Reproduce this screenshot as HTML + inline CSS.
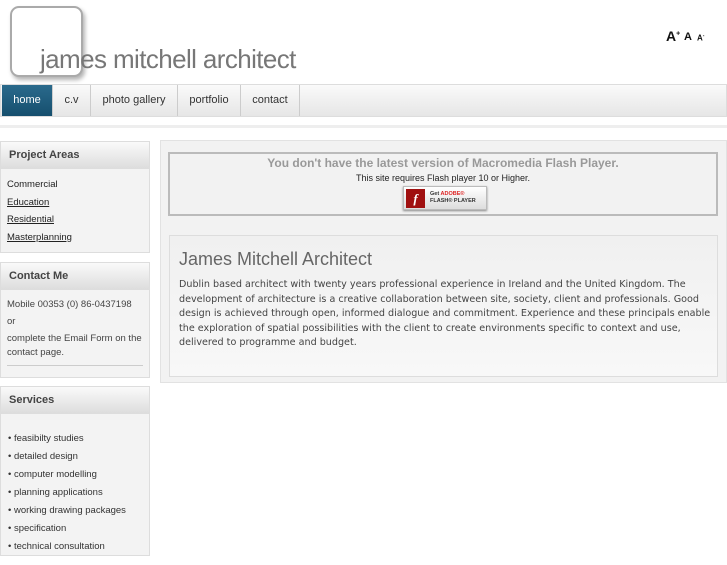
<!DOCTYPE html>
<html><head><style>
*{margin:0;padding:0;box-sizing:border-box}
body{width:727px;height:545px;overflow:hidden;background:#fff;font-family:"Liberation Sans",sans-serif;position:relative;color:#333}
.abs{position:absolute}
.logo{left:10px;top:6px;width:73px;height:71px;border:2px solid #aaa;border-radius:9px;background:#fff;box-shadow:2px 3px 4px rgba(0,0,0,.3)}
.title{left:40px;top:44px;font-size:26px;color:#777;letter-spacing:-0.6px;font-weight:300}
.nav{left:0;top:84px;width:727px;height:33px;border:1px solid #ddd;background:linear-gradient(#fafafa,#e6e6e6)}
.nav div{position:absolute;top:0;height:31px;line-height:31px;font-size:11px;color:#333;text-align:center;border-right:1px solid #ccc}
.box{left:0;width:150px;border:1px solid #ddd;background:#f3f3f3}
.hd{height:27px;line-height:26px;padding-left:8px;font-weight:bold;font-size:11px;color:#444;background:linear-gradient(#fafafa,#ddd);border-bottom:1px solid #ddd}
.bd{font-size:9.5px;color:#222;padding:6px 6px}
.bd p{height:17.5px}
.bd u{color:#222}
.li{height:18px;font-size:9.5px;color:#333}
</style></head><body>
<div class="abs logo"></div>
<div class="abs title">james mitchell architect</div>
<div class="abs" style="left:666px;top:28px;font-weight:bold;font-size:14px;color:#111">A<sup style="font-size:7px">+</sup></div>
<div class="abs" style="left:684px;top:31px;font-weight:bold;font-size:11px;color:#111">A</div>
<div class="abs" style="left:697px;top:33px;font-weight:bold;font-size:8px;color:#111">A<sup style="font-size:5px">-</sup></div>
<div class="abs nav">
<div style="left:1px;width:51px;background:linear-gradient(#2a6a8c,#164f6e);color:#fff">home</div>
<div style="left:52px;width:38px">c.v</div>
<div style="left:90px;width:87px">photo gallery</div>
<div style="left:177px;width:63px">portfolio</div>
<div style="left:240px;width:59px">contact</div>
</div>
<div class="abs" style="left:0;top:125px;width:727px;height:3px;background:#eee"></div>
<div class="abs box" style="top:141px;height:112px"><div class="hd">Project Areas</div>
<div class="bd" style="padding-top:10px"><p>Commercial</p><p><u>Education</u></p><p><u>Residential</u></p><p><u>Masterplanning</u></p></div></div>
<div class="abs box" style="top:262px;height:116px"><div class="hd">Contact Me</div>
<div class="bd" style="color:#444;padding-top:8px;line-height:14px"><p style="height:17px">Mobile 00353 (0) 86-0437198</p><p style="height:17px">or</p><p style="height:auto">complete the Email Form on the contact page.</p><div style="border-top:1px solid #ccc;margin-top:5px"></div></div></div>
<div class="abs box" style="top:386px;height:170px"><div class="hd">Services</div>
<div class="bd" style="padding-top:19px;padding-left:7px">
<div class="li">• feasibilty studies</div><div class="li">• detailed design</div><div class="li">• computer modelling</div><div class="li">• planning applications</div><div class="li">• working drawing packages</div><div class="li">• specification</div><div class="li">• technical consultation</div></div></div>
<div class="abs" style="left:160px;top:140px;width:567px;height:243px;background:#f2f2f2;border:1px solid #e2e2e2"></div>
<div class="abs" style="left:168px;top:152px;width:550px;height:64px;border:2px solid #bbb;background:#f2f2f2;text-align:center">
<div style="font-weight:bold;font-size:12px;color:#999;margin-top:2px">You don't have the latest version of Macromedia Flash Player.</div>
<div style="font-size:9px;color:#222;margin-top:3px">This site requires Flash player 10 or Higher.</div>
<div style="position:absolute;left:233px;top:32px;width:84px;height:24px;background:linear-gradient(#fff,#ddd);border:1px solid #bbb;box-shadow:0 1px 2px #888">
<div style="position:absolute;left:2px;top:2px;width:19px;height:19px;background:#a01010;color:#fff;font:italic bold 13px 'Liberation Serif';line-height:19px">f</div>
<div style="position:absolute;left:26px;top:4px;font-size:5.5px;font-weight:bold;text-align:left;line-height:7px;color:#333">Get <span style="color:#d22">ADOBE®</span><br>FLASH® PLAYER</div></div>
</div>
<div class="abs" style="left:169px;top:235px;width:549px;height:142px;border:1px solid #ddd;background:linear-gradient(#f0f0f0,#f8f8f8)">
<div style="position:absolute;left:9px;top:13px;font-size:18px;color:#666">James Mitchell Architect</div>
<div style="position:absolute;left:9px;top:42px;width:536px;font-family:'DejaVu Sans',sans-serif;font-size:9.6px;line-height:14.5px;color:#444">Dublin based architect with twenty years professional experience in Ireland and the United Kingdom. The development of architecture is a creative collaboration between site, society, client and professionals. Good design is achieved through open, informed dialogue and commitment. Experience and these principals enable the exploration of spatial possibilities with the client to create environments specific to context and use, delivered to programme and budget.</div>
</div>
</body></html>
